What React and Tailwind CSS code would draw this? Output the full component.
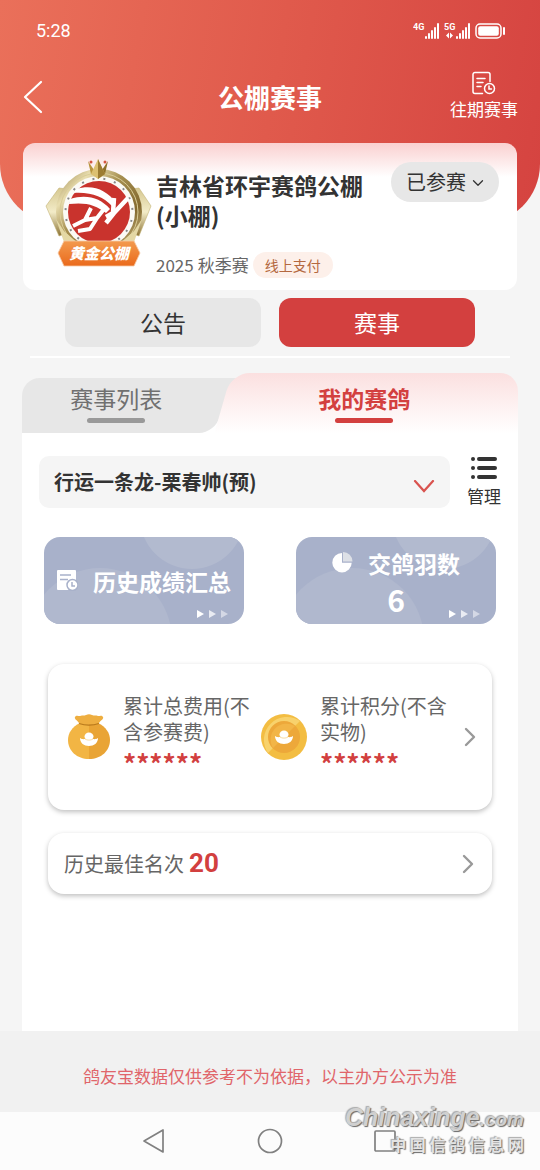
import { ChevronDown, ChevronRight } from "lucide-react";

function Signal({ label, data }) {
  return (
    <svg width="27" height="16" viewBox="0 0 27 16" fill="#fff" aria-hidden="true">
      <text x="0" y="7" fontSize="9" fontWeight="700" fontFamily="Roboto, sans-serif">
        {label}
      </text>
      {data && <path d="M2 12.500l3-3v6zM9 12.500l-3-3v6z" />}
      <rect x="12" y="13" width="2" height="3" rx="1" />
      <rect x="15" y="10" width="2" height="6" rx="1" />
      <rect x="18" y="7" width="2" height="9" rx="1" />
      <rect x="21" y="4" width="2" height="12" rx="1" />
      <rect x="24" y="0" width="2" height="16" rx="1" />
    </svg>
  );
}

function Battery() {
  return (
    <svg width="31" height="16" viewBox="0 0 31 16" aria-hidden="true">
      <rect x="1" y="1" width="25" height="14" rx="4" fill="none" stroke="#fff" strokeWidth="1.5" />
      <rect x="3.2" y="3.2" width="20.6" height="9.6" rx="2" fill="#fff" />
      <rect x="28" y="4" width="2" height="8" rx="1" fill="#fff" />
    </svg>
  );
}

function RecordIcon() {
  return (
    <svg width="24" height="24" viewBox="0 0 24 24" fill="none" stroke="#fff" strokeWidth="1.5" strokeLinecap="round" aria-hidden="true">
      <path d="M10.5 22.5H3a2 2 0 0 1-2-2v-17a2 2 0 0 1 2-2h13a2 2 0 0 1 2 2v7" />
      <path d="M5 7.5h8M5 11.5h6M5 15.5h4" />
      <circle cx="17.5" cy="17.5" r="5" />
      <path d="M17 15v3h2.5" />
    </svg>
  );
}

function Badge() {
  return (
    <svg className="shrink-0" width="107" height="112" viewBox="0 0 107 112" aria-hidden="true">
      <defs>
        <linearGradient id="gold" x1="0" y1="0" x2="1" y2="1">
          <stop offset="0" stopColor="#8d763c" />
          <stop offset="0.22" stopColor="#e9deb0" />
          <stop offset="0.42" stopColor="#a68f50" />
          <stop offset="0.7" stopColor="#83692f" />
          <stop offset="1" stopColor="#e6d9a0" />
        </linearGradient>
        <linearGradient id="wing" x1="0" y1="0" x2="0" y2="1">
          <stop offset="0" stopColor="#d6c890" />
          <stop offset="0.5" stopColor="#f3ecc8" />
          <stop offset="1" stopColor="#8d7436" />
        </linearGradient>
        <linearGradient id="ribbon" x1="0" y1="0" x2="0" y2="1">
          <stop offset="0" stopColor="#f39a4e" />
          <stop offset="1" stopColor="#ea6a1c" />
        </linearGradient>
      </defs>
      <path d="M14 31L1 49l13 30 12-4-10-25 6-18z" fill="url(#wing)" stroke="#c2b176" strokeWidth="0.6" />
      <path d="M94 31l12 18-12 30-12-4 10-25-6-18z" fill="url(#wing)" stroke="#c2b176" strokeWidth="0.6" />
      <circle cx="54" cy="55" r="43" fill="url(#gold)" />
      <circle cx="54" cy="55" r="39" fill="none" stroke="#d9cc96" strokeWidth="1" />
      <path d="M11 62l8 12 16 14H20z" fill="#e4d8a4" />
      <path d="M97 62l-8 12-16 14h15z" fill="#e4d8a4" />
      <circle cx="54" cy="55" r="36" fill="#fbfaf5" />
      <circle cx="54" cy="55" r="33.500" fill="none" stroke="#888" strokeWidth="2" strokeDasharray="2 9" strokeDashoffset="3" />
      <path d="M53 19L43 4l3 13z" fill="#b8953f" />
      <path d="M53 19L63 4l-3 13z" fill="#8f702a" />
      <path d="M46 17l7-15 7 15-7 5z" fill="#dcc071" />
      <path d="M53 2v20l7-5z" fill="#9c7c32" />
      <circle cx="46" cy="5" r="1.500" fill="#d4553f" />
      <circle cx="60" cy="5" r="1.500" fill="#d4553f" />
      <circle cx="54" cy="55" r="31" fill="#c9332d" />
      <path d="M31 32c17-5 31 1 40 14l-4 3c-9-9-20-14-38-13z" fill="#fff" />
      <path d="M25 42c17-5 30-1 40 10l-4 4c-10-8-20-11-37-9z" fill="#fff" />
      <g fill="none" stroke="#fff" strokeWidth="4.500" strokeLinejoin="round">
        <path d="M83 41L69 56l-8 10" />
        <path d="M69 41l-1 15-7 4" />
        <path d="M28 69l12-6 6-12M40 63l12-2 7-9M52 61l-7 11-12 2" strokeWidth="4" />
      </g>
      <path d="M19 84h70l6 12-6 13H19l-6-13z" fill="url(#ribbon)" stroke="#f6c9a4" strokeWidth="0.800" />
      <text
        x="54"
        y="102"
        textAnchor="middle"
        fontSize="15"
        fontWeight="900"
        fontStyle="italic"
        fill="#fff"
        fontFamily="'Noto Sans CJK SC', sans-serif"
      >
        黄金公棚
      </text>
    </svg>
  );
}

function ListIcon() {
  return (
    <svg width="28" height="24" viewBox="0 0 28 24" stroke="#333" strokeWidth="4" strokeLinecap="round" aria-hidden="true">
      <path d="M3 3h.01M9 3h16M3 12h.01M9 12h16M3 21h.01M9 21h16" />
    </svg>
  );
}

function ReportIcon() {
  return (
    <svg width="21" height="21" viewBox="0 0 21 21" aria-hidden="true">
      <path d="M1 0h17a1 1 0 0 1 1 1v19H1a1 1 0 0 1-1-1V1a1 1 0 0 1 1-1z" fill="#fff" />
      <path d="M3 5h11M3 9.5h8" stroke="#a8b1ca" strokeWidth="1.5" />
      <circle cx="15.5" cy="15" r="5.5" fill="#fff" stroke="#a8b1ca" strokeWidth="1.5" />
      <path d="M15 12v4h3" fill="none" stroke="#a8b1ca" strokeWidth="1.5" />
    </svg>
  );
}

function PieIcon() {
  return (
    <svg width="21" height="21" viewBox="0 0 21 21" aria-hidden="true">
      <path d="M10 1A9.7 9.7 0 1 0 19.700 10.700H10z" fill="#fff" />
      <path d="M11 0A9.5 9.500 0 0 1 20.500 9.500H11z" fill="#dde0e6" />
    </svg>
  );
}

function BagIcon() {
  return (
    <svg className="shrink-0" width="42" height="46" viewBox="0 0 42 46" aria-hidden="true">
      <path d="M12 9C4 13 0 19 0 26c0 11 9 19 21 19V9z" fill="#f2b544" />
      <path d="M30 9c8 4 12 10 12 17 0 11-9 19-21 19V9z" fill="#e9a435" />
      <path d="M11 9C9 6 6 5 7 3s3-1 5-1c3-1 4 0 6-1 2-1 4-1 6 0s4 0 6 1c2 0 4-1 5 1s-2 3-4 6c-6 2-14 2-20 0z" fill="#eeae40" />
      <path d="M11 9.5c6 2 14 2 20 0" fill="none" stroke="#b8791c" strokeWidth="1.2" />
      <path d="M12 24c3 2 5 1 7 0h4c2 1 4 2 7 0 0 5-4 8-9 8s-9-3-9-8z" fill="#fff" />
      <ellipse cx="21" cy="22.5" rx="4.5" ry="4" fill="#fff" />
      <path d="M17 25c2 1.5 6 1.5 8 0" fill="none" stroke="#f2c568" strokeWidth="0.6" />
    </svg>
  );
}

function CoinIcon() {
  return (
    <svg className="shrink-0" width="46" height="46" viewBox="0 0 46 46" aria-hidden="true">
      <circle cx="23" cy="23" r="23" fill="#f3bd42" />
      <path d="M7 39A23 23 0 0 1 39 7z" fill="#f8d26c" />
      <circle cx="23" cy="23" r="16" fill="#eda83a" />
      <path d="M12 34A16 16 0 0 1 34 12z" fill="#f2b547" />
      <path d="M14 22c3 2 5 1 7 0h4c2 1 4 2 7 0 0 5-4 8-9 8s-9-3-9-8z" fill="#fff" />
      <ellipse cx="23" cy="20.5" rx="4.5" ry="4" fill="#fff" />
      <path d="M19 23c2 1.5 6 1.5 8 0" fill="none" stroke="#f2c568" strokeWidth="0.6" />
    </svg>
  );
}

function StatCard({ children }) {
  return (
    <button
      type="button"
      className="relative flex h-[87px] flex-1 flex-col items-center justify-center overflow-hidden rounded-2xl bg-[#a8b1ca] text-[23px] leading-9 font-bold text-white"
    >
      <span className="absolute top-[31px] -left-4 size-36 rounded-full bg-[#b0b8ce]"></span>
      <span className="absolute -top-[72px] right-0 size-[104px] rounded-full bg-[#b2bacf]"></span>
      <span className="relative flex flex-col items-center">{children}</span>
      <svg className="absolute right-4 bottom-1.5" width="32" height="8" viewBox="0 0 32 8" fill="#fff" aria-hidden="true">
        <path d="M1 0l7 4-7 4z" />
        <path d="M13 0l7 4-7 4z" opacity="0.75" />
        <path d="M25 0l7 4-7 4z" opacity="0.5" />
      </svg>
    </button>
  );
}

function Total({ icon, label }) {
  return (
    <div className="flex flex-1 items-center gap-[13px]">
      {icon}
      <div className="flex-1 text-xl leading-[26px] text-[#666]">
        <p>{label}</p>
        <p className="text-[26px] leading-9 font-bold text-[#d2403f]">******</p>
      </div>
    </div>
  );
}

export default function App() {
  return (
    <div className="flex min-h-screen flex-col bg-[#f5f5f5] font-['Noto_Sans_CJK_SC',sans-serif] text-[#333]">
      <header className="h-56 rounded-b-[60px] bg-[linear-gradient(100deg,#ea705a,#e05a4c_50%,#d54340)] text-white">
        <div className="flex h-[62px] items-center justify-between pr-[34px] pl-9">
          <span className="font-[Roboto] text-lg">5:28</span>
          <div className="flex items-center gap-1">
            <Signal label="4G" />
            <Signal label="5G" data />
            <Battery />
          </div>
        </div>
        <div className="grid h-[70px] grid-cols-[1fr_auto_1fr] items-center px-[22px]">
          <button type="button" aria-label="返回">
            <svg width="22" height="34" viewBox="0 0 22 34" fill="none" stroke="#fff" strokeWidth="2.2" strokeLinecap="round" strokeLinejoin="round">
              <path d="M19 2L3 17l16 15" />
            </svg>
          </button>
          <h1 className="text-[26px] leading-9 font-bold">公棚赛事</h1>
          <button type="button" className="flex flex-col items-center justify-self-end text-[17px] leading-7">
            <RecordIcon />
            往期赛事
          </button>
        </div>
      </header>

      <section className="mx-[23px] -mt-[81px] flex h-[147px] gap-1 rounded-xl bg-[linear-gradient(#fad0d0,#fff_34px)] pt-[14px] pr-[18px] pl-[22px]">
        <Badge />
        <div className="flex-1 pt-[13px]">
          <h2 className="text-[23px] leading-[30px] font-bold">吉林省环宇赛鸽公棚(小棚)</h2>
          <p className="mt-[22px] flex items-center gap-1 text-[17px] leading-[26px] text-[#666]">
            <span className="flex gap-1">
              <span>2025</span>
              <span>秋季赛</span>
            </span>
            <span className="rounded-full bg-[#fdf0ea] px-3 text-sm leading-[26px] text-[#b4683f]">线上支付</span>
          </p>
        </div>
        <label className="relative mt-[5px] h-10 w-[108px] shrink-0">
          <span className="sr-only">参赛状态</span>
          <select className="h-10 w-full appearance-none rounded-full bg-[#e7e7e7] pl-[15px] text-xl leading-10">
            <option>已参赛</option>
          </select>
          <ChevronDown className="pointer-events-none absolute top-3 right-3 size-[18px]" strokeWidth={1.7} />
        </label>
      </section>

      <nav className="mx-[30px] flex gap-[18px] border-b-2 border-white px-[35px] pt-2 pb-[9px] text-[23px]">
        <button type="button" className="h-[49px] flex-1 rounded-xl bg-[#e7e7e7]">
          公告
        </button>
        <button type="button" className="h-[49px] flex-1 rounded-xl bg-[#d3403f] text-white">
          赛事
        </button>
      </nav>

      <main className="mx-[22px] mt-[15px] flex flex-1 flex-col">
        <div className="flex h-[60px] items-end text-[23px]" role="tablist">
          <button type="button" role="tab" aria-selected="false" className="relative h-[55px] flex-[19] text-[#707070]">
            <span className="absolute -right-4 bottom-0 h-5 w-14 bg-white"></span>
            <span className="absolute inset-y-0 right-10 left-0 rounded-tl-[18px] bg-[#e7e7e7]"></span>
            <span className="absolute top-0 -right-7 h-5 w-20 bg-[#e7e7e7]"></span>
            <span className="absolute inset-y-0 -right-[13px] w-20 -skew-x-[16deg] rounded-br-2xl bg-[#e7e7e7]"></span>
            <span className="relative flex h-full flex-col items-center">
              <span className="h-10 leading-10">赛事列表</span>
              <span className="h-[5px] w-[58px] rounded-full bg-[#999]"></span>
            </span>
          </button>
          <button type="button" role="tab" aria-selected="true" className="relative h-[60px] flex-[31] font-bold text-[#d3403f]">
            <span className="absolute inset-y-0 left-[13px] w-20 -skew-x-[16deg] rounded-tl-[18px] bg-linear-to-b from-[#fbe0e0] to-white"></span>
            <span className="absolute inset-y-0 right-0 left-10 rounded-tr-[18px] bg-linear-to-b from-[#fbe0e0] to-white"></span>
            <span className="relative flex h-full flex-col items-center pt-[5px]">
              <span className="h-10 leading-10">我的赛鸽</span>
              <span className="h-[5px] w-[58px] rounded-full bg-[#d3403f]"></span>
            </span>
          </button>
        </div>

        <div className="flex-1 bg-white pt-[23px] pb-9">
          <div className="flex items-center gap-[17px] px-[17px]">
            <label className="relative h-[52px] flex-1">
              <span className="sr-only">参赛人</span>
              <select className="h-full w-full appearance-none rounded-[10px] bg-[#f5f5f5] px-[15px] text-xl leading-10 font-bold">
                <option>行运一条龙-栗春帅(预)</option>
              </select>
              <svg className="pointer-events-none absolute top-6 right-[15px]" width="22" height="14" viewBox="0 0 22 14" fill="none" stroke="#d9534f" strokeWidth="2.2" strokeLinecap="round" aria-hidden="true">
                <path d="M2 1l9 10 9-10" />
              </svg>
            </label>
            <button type="button" className="flex flex-col items-center gap-1 text-[17px] leading-6">
              <ListIcon />
              管理
            </button>
          </div>

          <div className="mt-[29px] flex gap-[52px] px-[22px]">
            <StatCard>
              <span className="flex items-center gap-[15px]">
                <ReportIcon />
                历史成绩汇总
              </span>
            </StatCard>
            <StatCard>
              <span className="flex items-center gap-[15px]">
                <PieIcon />
                交鸽羽数
              </span>
              <span className="text-[30px]">6</span>
            </StatCard>
          </div>

          <a
            href="#totals"
            className="mx-[26px] mt-10 flex h-[146px] items-center rounded-2xl bg-white pr-2 pl-5 shadow-[0_2px_5px_rgba(0,0,0,0.25)]"
          >
            <Total icon={<BagIcon />} label="累计总费用(不含参赛费)" />
            <Total icon={<CoinIcon />} label="累计积分(不含实物)" />
            <ChevronRight className="-mr-0.5 size-8 shrink-0 text-[#999]" strokeWidth={1.8} />
          </a>

          <a
            href="#rank"
            className="mx-[26px] mt-[23px] flex h-[61px] items-center rounded-2xl bg-white pr-2 pl-4 text-xl text-[#666] shadow-[0_2px_5px_rgba(0,0,0,0.25)]"
          >
            历史最佳名次
            <span className="ml-[5px] flex-1 font-[Roboto] text-[26px] font-bold text-[#d2403f]">20</span>
            <ChevronRight className="size-8 text-[#999]" strokeWidth={1.8} />
          </a>
        </div>
      </main>

      <p className="bg-[#f1f1f1] pt-8 pb-6 text-center text-[17px] leading-[25px] text-[#e0656a]">
        鸽友宝数据仅供参考不为依据，以主办方公示为准
      </p>

      <footer className="relative flex h-[58px] items-center justify-center gap-[90px] bg-[#fcfcfc]">
        <button type="button" aria-label="后退">
          <svg width="26" height="26" viewBox="0 0 26 26" fill="none" stroke="#808080" strokeWidth="1.7" strokeLinejoin="round">
            <path d="M22 2v22L3 13z" />
          </svg>
        </button>
        <button type="button" aria-label="主页">
          <svg width="26" height="26" viewBox="0 0 26 26" fill="none" stroke="#808080" strokeWidth="1.7">
            <circle cx="13" cy="13" r="11.500" />
          </svg>
        </button>
        <button type="button" aria-label="最近任务">
          <svg width="26" height="26" viewBox="0 0 26 26" fill="none" stroke="#808080" strokeWidth="1.7">
            <rect x="2" y="3" width="20" height="20" rx="1" />
          </svg>
        </button>
        <div className="pointer-events-none absolute right-4 bottom-4 text-right font-bold text-[#d0d0d0] [text-shadow:1px_1px_1px_#666,-1px_-1px_1px_#aaa]">
          <p className="font-['Liberation_Sans'] text-[25px] leading-7 italic">
            Chinaxinge<span className="text-[19px]">.com</span>
          </p>
          <p className="text-base leading-5 text-[#e4e4e4]">中 国 信 鸽 信 息 网</p>
        </div>
      </footer>
    </div>
  );
}
